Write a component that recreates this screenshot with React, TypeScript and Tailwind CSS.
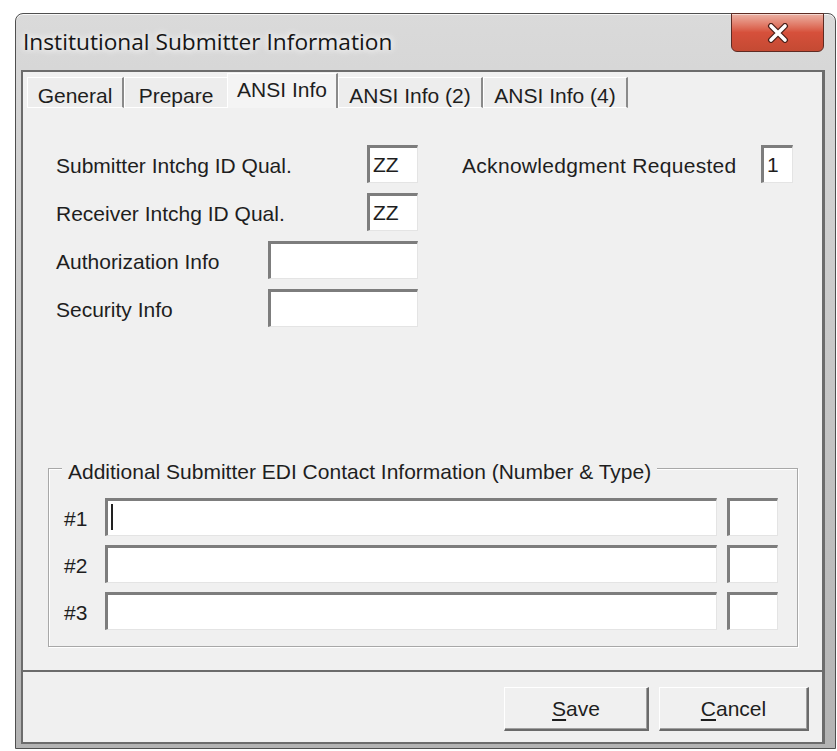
const tabs = [
  { label: 'General', w: 'w-[97px]' },
  { label: 'Prepare', w: 'w-[103px]' },
  { label: 'ANSI Info', w: 'w-[111px]' },
  { label: 'ANSI Info (2)', w: 'w-[145px]' },
  { label: 'ANSI Info (4)', w: 'w-[145px]' },
];

const activeTab = 'ANSI Info';

function Field({ w, value, cursor }: { w: string; value?: string; cursor?: boolean }) {
  return (
    <div
      className={`${w} h-[38px] shrink-0 bg-white border-t-[3px] border-l-[3px] border-r border-b border-t-[#7d7d7d] border-l-[#7d7d7d] border-r-[#e4e4e4] border-b-[#e4e4e4] flex items-center pl-[3px] pb-[2px] text-[21px] leading-none`}
    >
      {cursor && <span className="w-[2px] h-[26px] bg-[#222]" />}
      {value}
    </div>
  );
}

function CloseButton() {
  return (
    <button className="w-[93px] h-[39px] -mt-[1px] rounded-b-[6px] border border-[#5e2b23] bg-gradient-to-b from-[#eab0a3] via-[#d6503b] to-[#c44a33] shadow-[inset_0_1px_0_rgba(255,255,255,0.5)] flex items-center justify-center">
      <svg width="24" height="20" viewBox="0 0 24 20">
        <path d="M5 3 L19 17 M19 3 L5 17" stroke="#4a1f18" strokeWidth="6" strokeLinecap="round" />
        <path d="M5 3 L19 17 M19 3 L5 17" stroke="#ffffff" strokeWidth="3.6" strokeLinecap="round" />
      </svg>
    </button>
  );
}

function DialogButton({ w, hotkey, rest }: { w: string; hotkey: string; rest: string }) {
  return (
    <button
      className={`${w} h-[44px] bg-[#f0f0f0] border-t border-l border-white border-r-2 border-b-2 border-r-[#6a6a6a] border-b-[#6a6a6a] shadow-[inset_-1px_-1px_0_#a0a0a0] text-[21px] text-[#1e1e1e]`}
    >
      <span className="underline underline-offset-[3px]">{hotkey}</span>
      {rest}
    </button>
  );
}

export default function App() {
  return (
    <div className="min-h-screen bg-white font-['Liberation_Sans',Arial,sans-serif] text-[#1e1e1e]">
      <div className="pl-[15px] pt-[13px]">
        {/* window frame */}
        <div className="w-[821px] h-[736px] rounded-t-[8px] border border-[#4f4f4f] bg-gradient-to-b from-[#dadada] via-[#c6c6c6] to-[#b3b3b3] shadow-[inset_0_1px_0_rgba(255,255,255,0.8)] flex flex-col">
          {/* title bar */}
          <div className="h-[56px] shrink-0 flex items-start justify-between pl-[7px] pr-[11px]">
            <div className="pt-[13px] font-['Open_Sans',sans-serif] text-[22.7px] leading-[30px] text-[#151515] [text-shadow:0_0_10px_#ffffff,0_0_6px_#ffffff]">
              Institutional Submitter Information
            </div>
            <CloseButton />
          </div>

          {/* client area */}
          <div className="ml-[5px] mr-[10px] mb-[4px] flex-1 flex flex-col bg-[#f0f0f0] border-t-2 border-l-2 border-b-2 border-r-[3px] border-[#6c6c6c]">
            {/* tab strip */}
            <div className="h-[36px] shrink-0 flex items-end pl-[4px]">
              {tabs.map((t, i) => {
                const active = t.label === activeTab;
                const beforeActive = tabs[i + 1]?.label === activeTab;
                if (active) {
                  return (
                    <div
                      key={t.label}
                      className={`${t.w} h-[35px] shrink-0 bg-[#f4f4f4] border-t border-l border-white border-r-2 border-r-[#8a8a8a] flex items-center justify-center pb-[3px] text-[21px]`}
                    >
                      {t.label}
                    </div>
                  );
                }
                return (
                  <div
                    key={t.label}
                    className={`${t.w} h-[31px] shrink-0 bg-[#ededed] border-t border-l border-b border-white flex items-center justify-center pt-[6px] text-[21px] ${
                      beforeActive ? '' : 'border-r-2 border-r-[#8a8a8a]'
                    }`}
                  >
                    {t.label}
                  </div>
                );
              })}
            </div>

            {/* tab page */}
            <div className="h-[564px] shrink-0 border-b-2 border-[#6c6c6c] pt-[37px]">
              <div className="flex pl-[33px]">
                <div className="w-[362px] flex flex-col gap-[10px] text-[21px]">
                  <div className="h-[38px] flex items-center justify-between">
                    <span className="pt-[4px]">Submitter Intchg ID Qual.</span>
                    <Field w="w-[51px]" value="ZZ" />
                  </div>
                  <div className="h-[38px] flex items-center justify-between">
                    <span className="pt-[4px]">Receiver Intchg ID Qual.</span>
                    <Field w="w-[51px]" value="ZZ" />
                  </div>
                  <div className="h-[38px] flex items-center justify-between">
                    <span className="pt-[4px]">Authorization Info</span>
                    <Field w="w-[150px]" />
                  </div>
                  <div className="h-[38px] flex items-center justify-between">
                    <span className="pt-[4px]">Security Info</span>
                    <Field w="w-[150px]" />
                  </div>
                </div>
                <div className="ml-[44px] w-[331px] h-[38px] flex items-center justify-between text-[21px]">
                  <span className="pt-[4px] tracking-[0.3px]">Acknowledgment Requested</span>
                  <Field w="w-[32px]" value="1" />
                </div>
              </div>

              {/* contact group box */}
              <div className="ml-[25px] mt-[141px] w-[750px] h-[179px] border border-[#a8a8a8] shadow-[1px_1px_0_#ffffff,inset_1px_1px_0_#ffffff]">
                <div className="-mt-[9px] ml-[13px] w-fit px-[6px] bg-[#f0f0f0] text-[21px] leading-[24px]">
                  Additional Submitter EDI Contact Information (Number &amp; Type)
                </div>
                <div className="mt-[14px] pl-[15px] flex flex-col gap-[9px]">
                  {['#1', '#2', '#3'].map((n, i) => (
                    <div key={n} className="h-[38px] flex items-center">
                      <span className="w-[41px] pt-[4px] text-[21px]">{n}</span>
                      <Field w="w-[612px]" cursor={i === 0} />
                      <div className="w-[10px]" />
                      <Field w="w-[51px]" />
                    </div>
                  ))}
                </div>
              </div>
            </div>

            {/* dialog buttons */}
            <div className="flex-1 flex items-start justify-end gap-[10px] pt-[15px] pr-[13px]">
              <DialogButton w="w-[145px]" hotkey="S" rest="ave" />
              <DialogButton w="w-[150px]" hotkey="C" rest="ancel" />
            </div>
          </div>
        </div>
      </div>
    </div>
  );
}
